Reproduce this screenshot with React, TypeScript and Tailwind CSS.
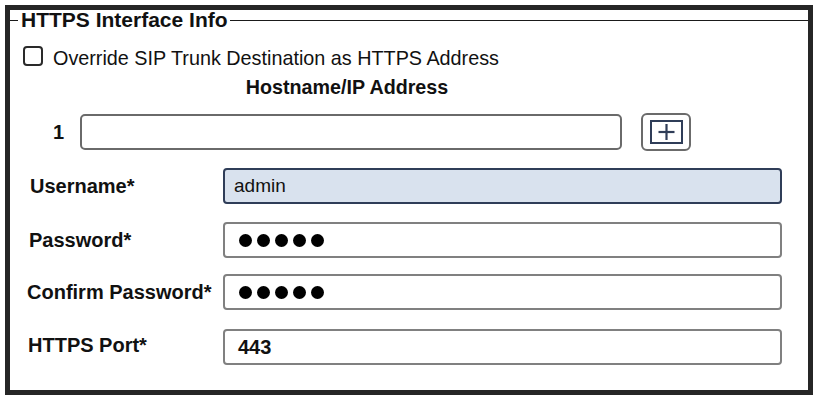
import React from "react";

function Dots() {
  return (
    <div className="flex items-center gap-[5px]">
      {[0, 1, 2, 3, 4].map((i) => (
        <span key={i} className="block w-[13px] h-[13px] rounded-full bg-black" />
      ))}
    </div>
  );
}

function FieldRow({
  label,
  labelPad,
  mt,
  children,
  className,
}: {
  label: string;
  labelPad: string;
  mt: string;
  children: React.ReactNode;
  className: string;
}) {
  return (
    <div className={`flex items-center ${mt}`}>
      <div className={`w-[213px] text-[20px] font-bold leading-[24px] ${labelPad}`}>{label}</div>
      <div className={`w-[559px] h-[36px] rounded-[4px] border-2 flex items-center ${className}`}>{children}</div>
    </div>
  );
}

export default function App() {
  return (
    <div className="w-[819px] h-[402px] bg-white p-[5px] font-['Liberation_Sans',Arial,sans-serif] text-[#111]">
      <div className="w-[808px] h-[390px] border-[5px] border-[#262626] flex flex-col">
        {/* legend */}
        <div className="flex items-center h-[20px]">
          <div className="w-[8px] h-px bg-[#1a1a1a]" />
          <div className="ml-[3px] text-[21px] font-bold leading-[20px] whitespace-nowrap">HTTPS Interface Info</div>
          <div className="ml-[2px] flex-1 h-px bg-[#1a1a1a]" />
        </div>

        {/* checkbox */}
        <div className="flex items-center h-[22px] mt-[15px] pl-[13px]">
          <span className="block w-[20px] h-[20px] rounded-[4px] border-[2.5px] border-[#2a2a2a]" />
          <span className="ml-[10px] text-[19.8px] leading-[22px] mt-[3px]">Override SIP Trunk Destination as HTTPS Address</span>
        </div>

        {/* hostname title */}
        <div className="mt-[10px] pl-[66px]">
          <div className="w-[542px] text-center text-[19.7px] font-bold leading-[20px]">Hostname/IP Address</div>
        </div>

        {/* row 1 */}
        <div className="flex items-center mt-[16px]">
          <div className="w-[70px] pl-[43px] text-[20px] font-bold leading-[24px]">1</div>
          <div className="w-[542px] h-[36px] rounded-[5px] border-2 border-[#6a6a6a]" />
          <div className="ml-[19px] w-[50px] h-[38px] rounded-[6px] border-2 border-[#6b6b6b] flex items-center justify-center">
            <svg width="33" height="24" viewBox="0 0 33 24">
              <rect x="1" y="1" width="31" height="22" fill="none" stroke="#2f3d58" strokeWidth="2" />
              <line x1="8.5" y1="12" x2="24.5" y2="12" stroke="#2f3d58" strokeWidth="2.2" />
              <line x1="16.5" y1="4" x2="16.5" y2="20" stroke="#2f3d58" strokeWidth="2.2" />
            </svg>
          </div>
        </div>

        <FieldRow label="Username*" labelPad="pl-[20px]" mt="mt-[17px]" className="bg-[#d9e2ee] border-[#2f3d58]">
          <span className="pl-[9px] text-[19px]">admin</span>
        </FieldRow>

        <FieldRow label="Password*" labelPad="pl-[19px]" mt="mt-[18px]" className="border-[#808080]">
          <div className="pl-[14px]">
            <Dots />
          </div>
        </FieldRow>

        <FieldRow label="Confirm Password*" labelPad="pl-[17px]" mt="mt-[16px]" className="border-[#808080]">
          <div className="pl-[14px]">
            <Dots />
          </div>
        </FieldRow>

        <FieldRow label="HTTPS Port*" labelPad="pl-[18px] -mt-[5px]" mt="mt-[19px]" className="border-[#808080]">
          <span className="pl-[13px] text-[20px] font-bold">443</span>
        </FieldRow>
      </div>
    </div>
  );
}
